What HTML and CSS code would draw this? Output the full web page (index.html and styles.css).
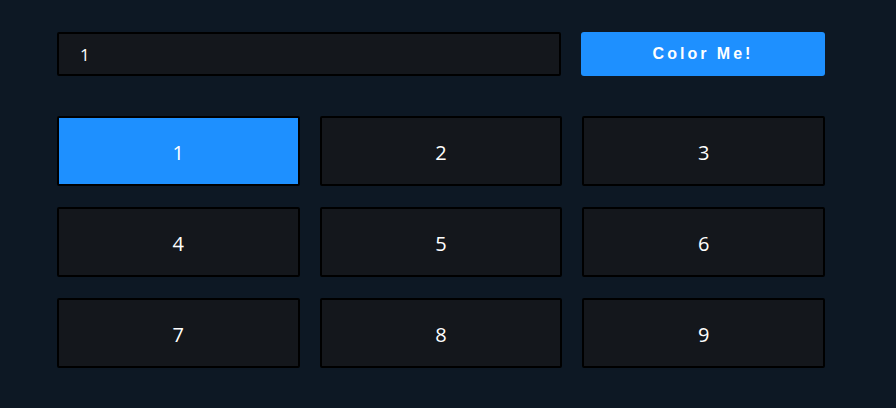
FILE: index.html
```html
<!DOCTYPE html>
<html>
<head>
<meta charset="utf-8">
<link rel="stylesheet" href="styles.css">
</head>
<body>
<div class="app">
  <div class="controls">
    <input class="field" type="text" value="1">
    <button class="color-btn">Color Me!</button>
  </div>
  <div class="grid">
    <div class="cell active">1</div>
    <div class="cell">2</div>
    <div class="cell">3</div>
    <div class="cell">4</div>
    <div class="cell">5</div>
    <div class="cell">6</div>
    <div class="cell">7</div>
    <div class="cell">8</div>
    <div class="cell">9</div>
  </div>
</div>
</body>
</html>
```
FILE: styles.css
```css
html, body {
  margin: 0;
  padding: 0;
  background: #0d1824;
  width: 896px;
  height: 408px;
  overflow: hidden;
}
.app {
  width: 768px;
  padding: 32px 0 0 57px;
  font-family: "Open Sans", sans-serif;
}
.controls {
  display: flex;
  gap: 20px;
  align-items: flex-start;
}
.field {
  flex: 1;
  box-sizing: border-box;
  height: 44px;
  background: #14171c;
  border: 2px solid #000;
  border-radius: 2px;
  color: #fff;
  font-family: "Open Sans", sans-serif;
  font-size: 17px;
  padding: 0 0 0 21px;
  outline: none;
  margin: 0;
}
.color-btn {
  width: 244px;
  height: 44px;
  margin: 0;
  background: #1e90ff;
  border: none;
  border-radius: 3px;
  color: #fff;
  font-family: "Liberation Sans", Arial, sans-serif;
  font-weight: bold;
  font-size: 16px;
  letter-spacing: 3px;
  padding: 0;
}
.grid {
  margin-top: 40px;
  display: grid;
  grid-template-columns: repeat(3, 1fr);
  column-gap: 20px;
  row-gap: 21px;
}
.cell {
  box-sizing: border-box;
  height: 70px;
  background: #14171c;
  border: 2px solid #000;
  border-radius: 2px;
  color: #fff;
  font-size: 20px;
  padding-top: 2px;
  display: flex;
  align-items: center;
  justify-content: center;
}
.cell.active {
  background: #1e90ff;
}
```
